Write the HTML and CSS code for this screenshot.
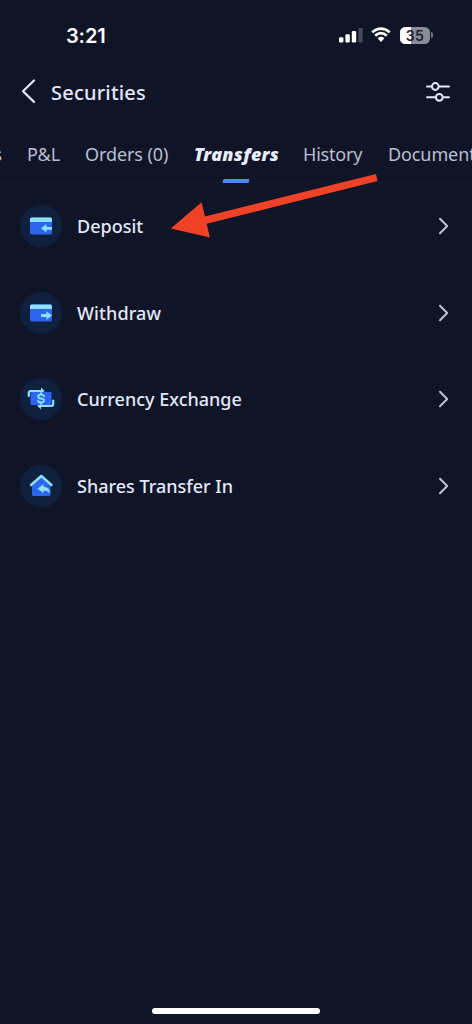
FILE: index.html
```html
<!DOCTYPE html>
<html lang="en">
<head>
<meta charset="utf-8">
<title>Securities</title>
<link rel="stylesheet" href="styles.css">
</head>
<body>
<div class="screen">
  <header class="status">
    <span class="time">3:21</span>
    <div class="status-icons">
      <svg class="signal" width="24" height="16" viewBox="0 0 24 16"><rect x="0" y="10.2" width="4.4" height="5.3" rx="1.2"/><rect x="6.4" y="7.2" width="4.4" height="8.3" rx="1.2"/><rect x="12.8" y="4" width="4.4" height="11.5" rx="1.2"/><rect class="dim" x="19.3" y="1" width="4.4" height="14.5" rx="1.2"/></svg>
      <svg class="wifi" width="20" height="16" viewBox="0 0 20 16"><path d="M1.2 5.2Q10-2 18.8 5.2M4.2 8.6Q10 3.7 15.8 8.6"/><path class="fill" d="M6.6 11.2Q10 8.4 13.4 11.2L10 15Z"/></svg>
      <span class="battery"><span class="level"></span><span class="percent">35</span></span><span class="cap"></span>
    </div>
  </header>
  <div class="titlebar">
    <svg class="back" width="15" height="26" viewBox="0 0 15 26"><path d="M13 2.5 2 13.2l11 10.7"/></svg>
    <h1 class="title">Securities</h1>
    <svg class="filter" width="24" height="22" viewBox="0 0 24 22"><path d="M1 5.500h3.500M13.500 5.500H23M1 16.300h8M18 16.300h5"/><circle cx="9.300" cy="5.500" r="3.400"/><circle cx="13.300" cy="16.300" r="3.400"/></svg>
  </div>
  <nav class="tabs">
    <span class="tab prior">Positions</span>
    <span class="tab pl">P&amp;L</span>
    <span class="tab orders">Orders (0)</span>
    <span class="tab active">Transfers</span>
    <span class="tab history">History</span>
    <span class="tab">Documents</span>
  </nav>
  <main class="list">
    <div class="row">
      <span class="disc"><svg width="28" height="28" viewBox="0 0 28 28"><rect class="blue" x="3" y="5.5" width="22" height="17" rx="2"/><path class="cyan" d="M3 10V7q0-1.5 1.5-1.5h19Q25 5.500 25 7v3z"/><path class="cyan" d="m14 16.300 5.500-4.300v2.900H25v2.800h-5.500v2.900z"/></svg></span>
      <span class="label">Deposit</span>
      <svg class="chevron" width="12" height="18" viewBox="0 0 12 18"><path d="m2 1.700 7.200 7.300L2 16.300"/></svg>
    </div>
    <div class="row">
      <span class="disc"><svg width="28" height="28" viewBox="0 0 28 28"><rect class="blue" x="3" y="5.5" width="22" height="17" rx="2"/><path class="cyan" d="M3 10V7q0-1.500 1.500-1.500h19Q25 5.500 25 7v3z"/><path class="cyan" d="m25 16.500-5.500-4.300v2.900H14v2.800h5.500v2.900z"/></svg></span>
      <span class="label withdraw">Withdraw</span>
      <svg class="chevron" width="12" height="18" viewBox="0 0 12 18"><path d="m2 1.700 7.200 7.300L2 16.300"/></svg>
    </div>
    <div class="row">
      <span class="disc"><svg width="28" height="28" viewBox="0 0 28 28"><rect class="blue" x="3.500" y="7" width="21" height="13" rx="1"/><path class="outline" d="M1.800 11V8Q1.800 6 4 6h12M26.200 15.500V19q0 2-2.200 2H12"/><path class="cyan" d="m14 2.500 4 3.800H14zM14 24.600l-4-4h4z"/><path class="dollar" d="M17 11.100q-.8-1.600-3-1.600-2.900 0-2.900 2t2.900 2 3 2-3 2q-2.400 0-3.100-1.700M14 8v1.500M14 17.500V19"/></svg></span>
      <span class="label">Currency Exchange</span>
      <svg class="chevron" width="12" height="18" viewBox="0 0 12 18"><path d="m2 1.700 7.200 7.300L2 16.300"/></svg>
    </div>
    <div class="row">
      <span class="disc"><svg width="28" height="28" viewBox="0 0 28 28"><path class="blue" d="M5 11.500 14 5l9.500 6.500v11q0 1.500-1.500 1.500H6.500Q5 24 5 22.500z"/><path class="roof" d="M4 13 14.300 4 24.500 13"/><path class="cyan" d="m10.500 16.700 6-4.700v2.700q6.500 0 6.500 6.500-2.200-2.600-6.500-2.600v2.700z"/></svg></span>
      <span class="label">Shares Transfer In</span>
      <svg class="chevron" width="12" height="18" viewBox="0 0 12 18"><path d="m2 1.700 7.200 7.300L2 16.300"/></svg>
    </div>
  </main>
  <footer class="home"><span class="home-bar"></span></footer>
  <svg class="pointer" width="208" height="66" viewBox="0 0 208 66"><path d="M.8 55.600 31.600 29.300l3.300 14.200L206 1l1.500 7L36.700 50.800l3.200 13.600z"/></svg>
</div>
</body>
</html>
```
FILE: styles.css
```css
* { box-sizing: border-box; }
body { margin: 0; background: #0f1526; font-family: "Noto Sans", "Open Sans", sans-serif; color: #e3e8fa; }
svg { display: block; flex: none; }
.screen { position: relative; width: 472px; height: 1024px; overflow: hidden; display: flex; flex-direction: column; }
.status { height: 64px; padding: 6px 39px 0 66px; display: flex; align-items: center; justify-content: space-between; }
.time { font: 600 20px/24px Inter, sans-serif; color: #fff; letter-spacing: -0.1px; padding-top: 1px; }
.status-icons { display: flex; align-items: center; }
.signal { fill: #fff; margin-right: 8px; }
.signal .dim { fill: #43485a; }
.wifi { fill: none; stroke: #fff; stroke-width: 2.7; margin-right: 9px; }
.wifi .fill { fill: #fff; stroke: none; }
.battery { position: relative; width: 30px; height: 17px; border-radius: 5.500px; background: #8a8d97; overflow: hidden; }
.level { position: absolute; left: 0; top: 0; bottom: 0; width: 10.500px; background: #fff; }
.percent { position: relative; display: block; text-align: center; font: 600 14px/17px Inter, sans-serif; letter-spacing: 0.3px; color: #1d2230; }
.cap { width: 2px; height: 6px; margin-left: 1px; background: #71757f; border-radius: 0 2px 2px 0; }
.titlebar { height: 56px; display: flex; align-items: center; padding: 0 22px 0 21px; }
.back { fill: none; stroke: #e3e8fa; stroke-width: 2.200; stroke-linecap: round; stroke-linejoin: round; margin-top: -2px; }
.title { margin: 0 auto 0 15px; padding-top: 1px; font-size: 20px; line-height: 28px; font-weight: 500; letter-spacing: 0.2px; }
.filter { fill: none; stroke: #e3e8fa; stroke-width: 2; stroke-linecap: round; margin-top: -1px; }
.tabs { height: 63px; display: flex; padding-top: 21px; border-bottom: 1px solid #151d2d; white-space: nowrap; font-size: 18px; line-height: 26px; letter-spacing: -0.1px; color: #b9bfd2; }
.tab { flex: none; }
.prior { width: 26px; padding-right: 24px; direction: rtl; }
.pl { width: 58px; margin-left: 1px; }
.orders { width: 109px; }
.active { width: 109px; position: relative; font-weight: 900; font-style: italic; letter-spacing: 0.3px; color: #e9eeff; }
.active::after { content: ""; position: absolute; left: 29px; top: 38px; width: 26px; height: 4px; background: #498dea; border-radius: 1px; transform: skewX(-15deg); }
.history { width: 85px; letter-spacing: -0.2px; }
.list { flex: 1; }
.row { height: 86.500px; display: flex; align-items: center; padding: 0 22px 0 20px; }
.disc { width: 42px; height: 42px; border-radius: 50%; background: #10213f; display: grid; place-items: center; margin-right: 15px; }
.label { margin-right: auto; font-size: 18px; line-height: 26px; font-weight: 500; }
.withdraw { letter-spacing: 0.1px; }
.blue { fill: #2d65ed; }
.cyan { fill: #8ce1ff; }
.outline, .dollar, .roof { fill: none; stroke: #8ce1ff; stroke-width: 2.200; stroke-linecap: round; stroke-linejoin: round; }
.dollar { stroke-width: 1.800; }
.roof { stroke-width: 2.400; }
.chevron { fill: none; stroke: #bbc2d6; stroke-width: 2; stroke-linecap: round; stroke-linejoin: round; }
.home { height: 16px; display: flex; justify-content: center; }
.home-bar { width: 168px; height: 6px; border-radius: 3px; background: #fff; }
.pointer { position: absolute; left: 170px; top: 173px; fill: #f04227; }
```
